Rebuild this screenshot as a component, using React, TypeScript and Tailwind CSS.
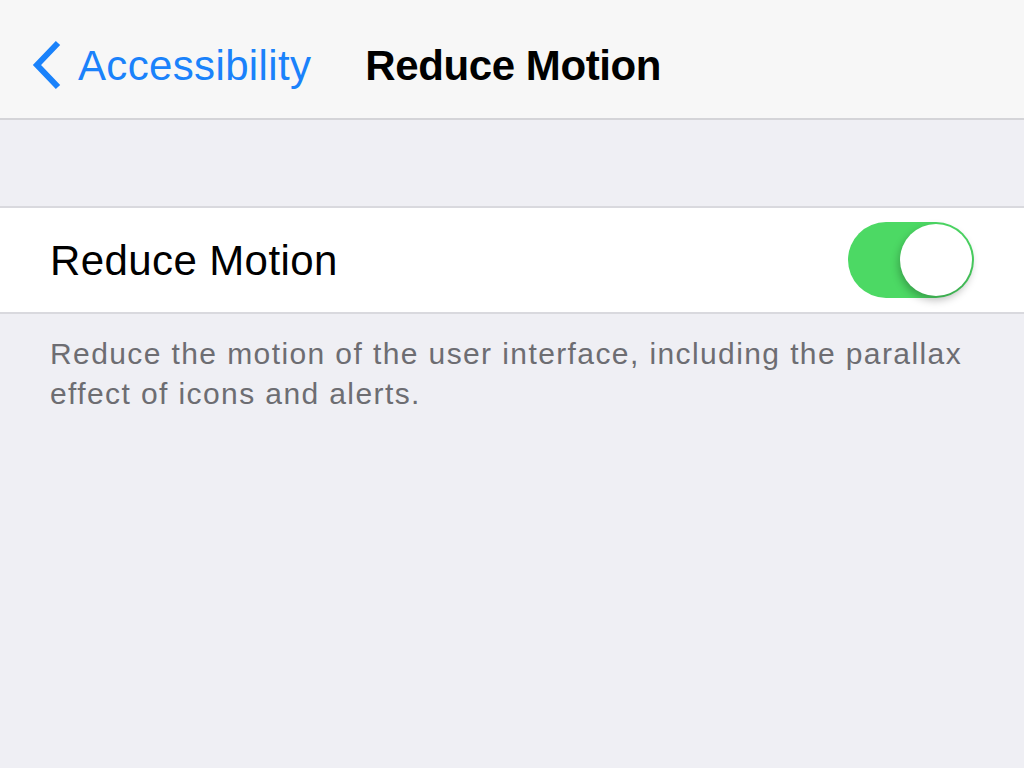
export default function App() {
  return (
    <div
      className="flex h-[768px] w-[1024px] flex-col bg-[#efeff4]"
      style={{ fontFamily: '"Liberation Sans", Arial, sans-serif' }}
    >
      <header className="flex h-[120px] items-center border-b-2 border-[#d4d4d8] bg-[#f7f7f7] pl-[30px] pt-[12px]">
        <svg width="34" height="52" viewBox="0 0 34 52" className="shrink-0">
          <path d="M28 4 L7 26 L28 48" fill="none" stroke="#1a82fb" strokeWidth="6" />
        </svg>
        <span className="ml-[14px] text-[42px] tracking-[0.35px] text-[#1a82fb]">Accessibility</span>
        <span className="ml-[54px] text-[42px] font-bold tracking-[-0.4px] text-black">Reduce Motion</span>
      </header>

      <div className="h-[86px]" />

      <div className="flex h-[108px] items-center justify-between border-y-2 border-[#d9d9de] bg-white pl-[50px] pr-[50px]">
        <span className="text-[42px] tracking-[0.4px] text-black">Reduce Motion</span>
        <div className="relative h-[76px] w-[126px] rounded-full bg-[#4cd964]">
          <div className="absolute right-[2px] top-[2px] h-[72px] w-[72px] rounded-full bg-white shadow-[-1px_4px_8px_rgba(0,0,0,0.28)]" />
        </div>
      </div>

      <p className="mt-[20px] px-[50px] text-[30px] leading-[40px] tracking-[1.4px] text-[#6d6d72]">
        Reduce the motion of the user interface, including the parallax effect of icons and alerts.
      </p>
    </div>
  );
}
